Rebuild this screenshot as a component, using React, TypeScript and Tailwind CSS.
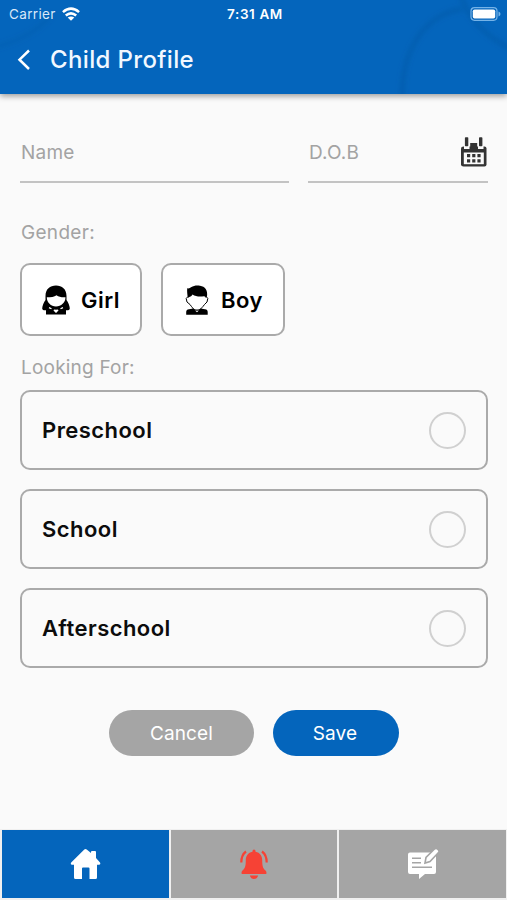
import React from "react";

function CalendarIcon() {
  return (
    <svg width="28" height="32" viewBox="0 0 28 32" className="shrink-0">
      <path d="M3.500 10.500H24.500Q26.500 10.500 26.500 12.500V28.500Q26.500 30.500 24.500 30.500H3.500Q1 30.500 1 28.500V12.500Q1 10.500 3.500 10.500Z" fill="#333" />
      <rect x="10.200" y="7" width="7" height="6" fill="#333" />
      <path d="M4 9V13H9.500V9M18 9V13H23.500V9" fill="#fafafa" />
      <rect x="4.900" y="1.200" width="3.400" height="9" rx=".8" fill="#333" />
      <rect x="19" y="1.200" width="3.400" height="9" rx=".8" fill="#333" />
      <rect x="3.800" y="16.500" width="20" height="11.700" fill="#fafafa" />
      <path d="M7 18h3.200v3.200H7zM12.200 18h3.200v3.200h-3.200zM17.400 18h3.200v3.200h-3.200zM7 23.200h3.200v3.200H7zM12.200 23.200h3.200v3.200h-3.200zM17.400 23.200h3.200v3.200h-3.200z" fill="#333" />
    </svg>
  );
}

function GirlIcon() {
  return (
    <svg width="28" height="30" viewBox="0 0 28 30" className="shrink-0">
      <path d="M3.500 15V11C3.500 4 8 .5 14 .5S24.500 4 24.500 11V15C26 17 27.800 21 27.800 23.500C27.800 25 26 25.500 24 25.300V29.500H4V25.300C2 25.500 .2 25 .2 23.500C.2 21 2 17 3.500 15Z" />
      <path d="M4.800 12.300C9 12.300 12.300 12 14.500 10.300C17 12.200 20 12.500 23.500 12.300C23.500 17.500 19 21.500 14 21.500S4.800 17.500 4.800 12.300Z" fill="#fff" />
      <path d="M14 28L11.500 25.500Q12 23.700 14 24.800Q16 23.700 16.500 25.500Z" fill="#fff" />
      <path d="M7 22.600L9.500 23.800M21 22.600L18.500 23.800" fill="none" stroke="#fff" strokeWidth="1.200" />
    </svg>
  );
}

function BoyIcon() {
  return (
    <svg width="24" height="30" viewBox="0 0 24 30" className="shrink-0">
      <path d="M3 11.500L1.200 13.500L2 17L5 19.500C7 22.500 8.500 23.500 9 25H15C15.500 23.500 17.500 22.500 19.500 19.500L22 17L22.800 13.500L21.200 11.500" fill="#fff" stroke="#000" strokeWidth="1" />
      <path d="M2.800 13C2.300 9 1.800 6 2.300 3.300C4 3.600 5 3.300 6 2.300C9 .3 12 .3 15 .7C20 1.500 23 5 22 11.500L20.800 13C20.500 12 20 11.500 19 11.300C14 11.800 10.500 11.500 7.500 9.500C6.500 11.500 5 11.500 2.800 13Z" />
      <path d="M1.200 29.700V27Q1.200 24.500 4 24.200L8.500 23.500Q12 27 15.500 23.500L20 24.200Q22.700 24.500 22.700 27V29.700Z" />
      <path d="M9.800 25.200Q12 26.500 14.200 25.200L12 27.300Z" fill="#fff" />
    </svg>
  );
}

function StatusBar() {
  return (
    <div className="relative grid h-7 grid-cols-3 items-center pl-[9px] pr-[6px] text-[13.500px] text-white">
      <div className="flex items-center gap-[6px]">
        <span className="tracking-[0.350px] text-[#d8e8f8]">Carrier</span>
        <svg width="18" height="14" viewBox="0 0 19 14" fill="none" stroke="#fff" strokeWidth="2.700">
          <path d="M1 5Q9.500 -2.200 18 5M4 8.600Q9.500 4 15 8.600" />
          <path d="M6 10.800Q9.500 8.300 13 10.800L9.500 14Z" fill="#fff" stroke="none" />
        </svg>
      </div>
      <span className="text-center text-[13.500px] font-semibold tracking-[0.600px]">7:31 AM</span>
      <svg width="31" height="14" viewBox="0 0 31 14" className="justify-self-end">
        <rect x="1" y=".7" width="26" height="12.600" rx="3.500" fill="none" stroke="#75b3e8" strokeWidth="1.200" />
        <rect x="2.800" y="2.500" width="22.400" height="9" rx="1.800" fill="#fff" />
        <path d="M28.500 4.500Q30.500 5.200 30.500 7T28.500 9.500Z" fill="#75b3e8" />
      </svg>
    </div>
  );
}

function Header() {
  return (
    <header className="relative h-[94px] shrink-0 bg-[#0465bc] shadow-[0_2px_6px_rgba(0,0,0,0.4)]">
      <svg width="507" height="94" viewBox="0 0 507 94" className="absolute inset-0">
        <defs>
          <filter id="ring" x="-20%" y="-20%" width="140%" height="140%">
            <feGaussianBlur stdDeviation="2.500" />
          </filter>
        </defs>
        <g filter="url(#ring)" fill="none" stroke="#07539b" strokeOpacity=".45" strokeWidth="4">
          <path d="M403 110C398 63 416 26 447 13Q454 10 462 9" />
          <path d="M460 -8C467 18 484 36 515 51" />
          <path d="M-4 47Q34 37 52 14" strokeOpacity=".25" />
        </g>
      </svg>
      <StatusBar />
      <div className="relative flex h-16 items-center pl-[16px]">
        <svg width="15" height="22" viewBox="0 0 15 22" fill="none" stroke="#fff" strokeWidth="2.500">
          <path d="M13 1.500L3.500 10.700L13 20" />
        </svg>
        <h1 className="ml-[19px] text-[24px] font-medium tracking-[0.350px] text-[#f2f8ff]">Child Profile</h1>
      </div>
    </header>
  );
}

function Option({ label }: { label: string }) {
  return (
    <div className="flex h-[80px] items-center justify-between rounded-[10px] border-2 border-[#aaaaaa] pl-5 pr-5">
      <span className="pt-px text-[22px] font-semibold tracking-[0.450px] text-[#0c0c0c]">{label}</span>
      <span className="size-[37px] rounded-full border-2 border-[#d0d0d0]" />
    </div>
  );
}

function BottomNav() {
  return (
    <nav className="mt-auto grid h-[71px] grid-cols-3 gap-[2px] bg-[#f0f0f0] pb-[2px] pl-[2px] pr-px pt-px">
      <div className="flex items-center justify-center bg-[#0465bc]">
        <svg width="31" height="32" viewBox="0 0 31 32" fill="#fff">
          <path d="M14.300 1.600Q15.500 .6 16.700 1.600L21 5V4Q21 3 22 3H25Q26 3 26 4V10L30 14.500Q31 16.500 29 16.700H27V29.500Q27 31 25.500 31H19.500V20.500Q19.500 19.500 18.500 19.500H13Q12 19.500 12 20.500V31H5.500Q4 31 4 29.500V16.700H2Q0 16.500 1.200 14.500Z" />
        </svg>
      </div>
      <div className="flex items-center justify-center bg-[#a5a5a5]">
        <svg width="28" height="32" viewBox="0 0 28 32" fill="#f64235">
          <path d="M12.500 3Q12.500 1.500 14 1.500T15.500 3V3.700C20 4.500 22.200 8 22.200 12C22.200 18 23 20.500 25.500 22.500Q27 24 26.200 26H1.800Q1 24 2.500 22.500C5 20.500 5.800 18 5.800 12C5.800 8 8 4.500 12.500 3.700ZM9.800 27.500H18.200Q17 31 14 31T9.800 27.500Z" />
          <path d="M6 3.500Q1.300 7 1.300 14.500M22 3.500Q26.700 7 26.700 14.500" fill="none" stroke="#f64235" strokeWidth="2.200" />
        </svg>
      </div>
      <div className="flex items-center justify-center bg-[#a5a5a5]">
        <svg width="32" height="32" viewBox="0 0 32 32">
          <path d="M3 4.500H27Q29 4.500 29 6.500V24Q29 26 27 26H18L12 31V26H3Q1 26 1 24V6.500Q1 4.500 3 4.500Z" fill="#fff" />
          <path d="M5 10.300H14M5 14.800H14M5 19.300H25" stroke="#a5a5a5" strokeWidth="1.600" />
          <path d="M18 15L19 9.500L27 1.500Q29-.5 31 1.500T31 5L23 13.500Z" fill="#fff" stroke="#a5a5a5" strokeWidth="1.600" />
        </svg>
      </div>
    </nav>
  );
}

export default function App() {
  return (
    <div className="flex h-[900px] w-[507px] flex-col overflow-hidden bg-[#fafafa] font-['Inter',sans-serif]">
      <Header />
      <main className="pl-5 pr-[19px]">
        <div className="mt-[29px] flex gap-[19px]">
          <div className="flex h-[60px] flex-1 items-center border-b-2 border-[#c3c3c3] pl-px pt-[3px] text-[19px] tracking-[0.200px] text-[#a3a3a3]">
            Name
          </div>
          <div className="flex h-[60px] w-[180px] items-center justify-between border-b-2 border-[#c3c3c3] pl-px text-[19px] tracking-[0.200px] text-[#a3a3a3]">
            <span className="pt-[3px]">D.O.B</span>
            <CalendarIcon />
          </div>
        </div>
        <p className="mt-[36px] pl-px text-[19px] leading-7 tracking-[0.300px] text-[#a3a3a3]">Gender:</p>
        <div className="mt-[16px] flex gap-[19px]">
          <button className="flex h-[73px] w-[122px] items-center rounded-[10px] border-2 border-[#aaaaaa] bg-white pl-5">
            <GirlIcon />
            <span className="ml-[11px] pt-px text-[22px] font-semibold tracking-[0.450px]">Girl</span>
          </button>
          <button className="flex h-[73px] w-[124px] items-center rounded-[10px] border-2 border-[#aaaaaa] bg-white pl-[22px]">
            <BoyIcon />
            <span className="ml-[12px] pt-px text-[22px] font-semibold tracking-[0.450px]">Boy</span>
          </button>
        </div>
        <p className="mt-[18px] pl-px text-[19px] leading-7 tracking-[0.200px] text-[#a3a3a3]">Looking For:</p>
        <div className="mt-[8px] flex flex-col gap-[19px]">
          <Option label="Preschool" />
          <Option label="School" />
          <Option label="Afterschool" />
        </div>
        <div className="mt-[42px] flex gap-[19px] pl-[89px] text-[19px] tracking-[0.100px] text-white">
          <button className="h-[46px] w-[145px] rounded-full bg-[#a5a5a5] pt-[2px]">Cancel</button>
          <button className="h-[46px] w-[126px] rounded-full bg-[#0465bc] pr-[2px] pt-[2px]">Save</button>
        </div>
      </main>
      <BottomNav />
    </div>
  );
}
